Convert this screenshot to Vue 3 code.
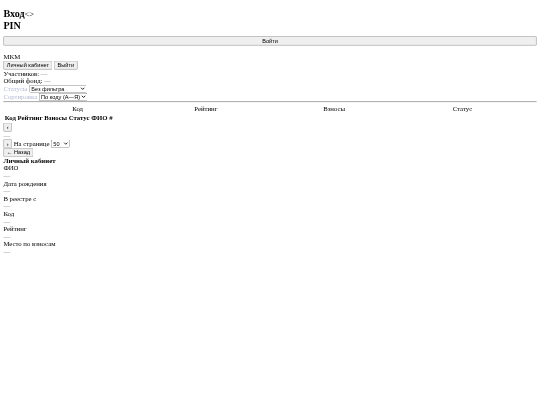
<template>
  <div class="frame">
    <div class="page">
      <h2 class="login-title">Вход<small class="arrows">&lt;&gt;</small><br />PIN</h2>
      <button class="login-btn">Войти</button>

      <div>
        <div>MKM</div>
        <div>
          <button>Личный кабинет</button>{{ ' ' }}<button>Выйти</button>
        </div>
        <div>Участников: <span class="muted">—</span></div>
        <div>Общий фонд: <span class="muted">—</span></div>
        <div>
          <label class="pale">Статусы</label>{{ ' ' }}<select class="status-select"><option>Без фильтра</option></select>
        </div>
        <div>
          <label class="pale">Сортировка</label>{{ ' ' }}<select><option>По коду (А—Я)</option></select>
        </div>
      </div>

      <div class="head-row">
        <div v-for="col in headCols" :key="col">{{ col }}</div>
      </div>

      <table class="mini-table">
        <thead>
          <tr>
            <th v-for="col in miniCols" :key="col">{{ col }}</th>
          </tr>
        </thead>
      </table>

      <button>‹</button>
      <div class="muted">—</div>
      <div>
        <button>›</button>
        На странице
        <select class="per-page"><option>50</option></select>
      </div>
      <button>← Назад</button>

      <div>
        <div><b>Личный кабинет</b></div>
        <template v-for="field in fields" :key="field">
          <div>{{ field }}</div>
          <div class="muted">—</div>
        </template>
      </div>
    </div>
  </div>
</template>

<script setup>
const headCols = ['Код', 'Рейтинг', 'Взносы', 'Статус']
const miniCols = ['Код', 'Рейтинг', 'Взносы', 'Статус', 'ФИО', '#']
const fields = ['ФИО', 'Дата рождения', 'В реестре с', 'Код', 'Рейтинг', 'Место по взносам']
</script>

<style>
html,
body {
  background: #fff;
}
</style>

<style scoped>
.frame {
  width: 540px;
  height: 405px;
  overflow: hidden;
  filter: blur(0.25px);
}
/* the reference is a 1280 wide page shrunk down to 540 */
.page {
  box-sizing: border-box;
  width: 1280px;
  padding: 8px;
  transform: scale(0.421875);
  transform-origin: 0 0;
  font-family: 'Liberation Serif', serif;
  font-size: 16px;
  color: #000;
}
.login-title {
  margin: 12px 0 12px;
  font-size: 24px;
}
.arrows {
  font-size: 20px;
  font-weight: 400;
}
.login-btn {
  display: block;
  width: 100%;
  height: 22px;
  margin-bottom: 18px;
}
button,
select {
  font-family: 'Liberation Sans', sans-serif;
  font-size: 13.33px;
}
.muted {
  color: #777;
}
.pale {
  color: #b4bcd4;
}
.status-select {
  width: 136px;
}
.per-page {
  width: 44px;
}
.head-row {
  display: grid;
  grid-template-columns: repeat(4, 1fr);
  margin-top: 1px;
  border-top: 2px solid #999;
  padding: 6px 24px 0;
  text-align: center;
}
.mini-table {
  margin-top: 1px;
  border-spacing: 2px;
  text-align: left;
}
.mini-table th {
  padding: 1px;
}
</style>
